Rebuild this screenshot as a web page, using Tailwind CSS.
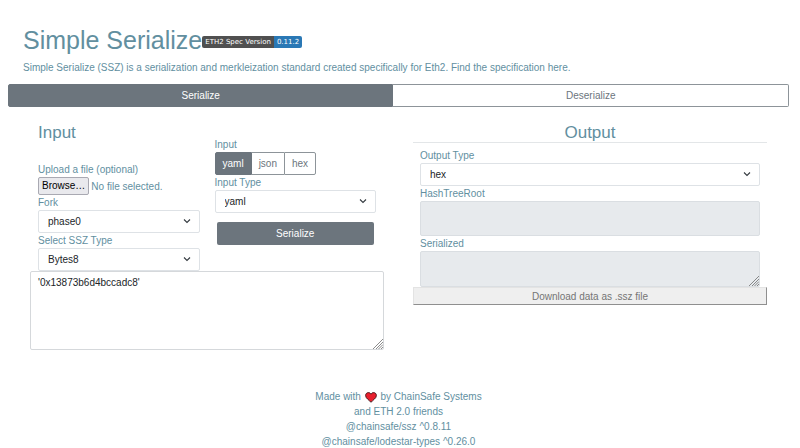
<!DOCTYPE html>
<html lang="en">
  <head>
    <meta charset="UTF-8" />
    <meta name="viewport" content="width=device-width, initial-scale=1.0" />
    <title>Simple Serialize</title>
    <script src="https://cdn.jsdelivr.net/npm/@tailwindcss/browser@4"></script>
  </head>
  <body
    class="bg-white font-['Liberation_Sans',Arial,sans-serif] text-[10px] leading-[15px] text-[#628f9f]"
  >
    <!-- Header -->
    <header class="px-[23px] pt-[25px]">
      <div class="flex items-center">
        <h1 class="text-[25px] leading-[30px]">Simple Serialize</h1>
        <span
          class="mt-1 flex h-3 overflow-hidden rounded-xs font-['DejaVu_Sans',sans-serif] text-[7px] leading-3 text-white"
        >
          <span class="bg-[#505050] px-[3px]">ETH2 Spec Version</span>
          <span class="bg-[#2a78b5] px-[3px]">0.11.2</span>
        </span>
      </div>
      <p class="mt-[5px]">
        Simple Serialize (SSZ) is a serialization and merkleization standard
        created specifically for Eth2. Find the specification
        <a href="#">here</a>.
      </p>
    </header>

    <!-- Mode tabs -->
    <nav class="mt-[9px] mr-[11px] ml-2 flex h-[23px]">
      <button
        type="button"
        class="flex-auto rounded-l-xs border border-[#6c757d] bg-[#6c757d] text-white"
      >
        Serialize
      </button>
      <button
        type="button"
        class="flex-auto rounded-r-xs border border-l-0 border-[#8d9499] text-[#6c757d]"
      >
        Deserialize
      </button>
    </nav>

    <main class="mr-[33px] ml-[30px] grid grid-cols-2 gap-[29px]">
      <!-- Input -->
      <section>
        <div class="grid grid-cols-2 gap-[15px] px-2">
          <div>
            <h2 class="mt-4 mb-[19px] text-[17px] leading-5">Input</h2>
            <label for="file" class="block">Upload a file (optional)</label>
            <label for="file" class="flex h-[18px] items-center">
              <span
                class="rounded-xs border border-[#a9a9b2] bg-[#e9e9ed] px-[3px] leading-4 text-black"
                >Browse…</span
              >
              <span class="ml-0.5">No file selected.</span>
              <input type="file" id="file" class="sr-only" />
            </label>
            <label for="fork" class="block">Fork</label>
            <div class="relative">
              <select
                id="fork"
                class="block h-[23px] w-full appearance-none rounded-xs border border-[#dee2e6] bg-white px-[9px] text-[#212529]"
              >
                <option>phase0</option>
              </select>
              <svg
                class="pointer-events-none absolute top-[7px] right-[9px] size-2"
                viewBox="0 0 8 8"
                fill="none"
                stroke="#343a40"
                stroke-width="1.1"
              >
                <path d="M1 2.5 4 5.5 7 2.5" />
              </svg>
            </div>
            <label for="sszType" class="block">Select SSZ Type</label>
            <div class="relative">
              <select
                id="sszType"
                class="block h-[23px] w-full appearance-none rounded-xs border border-[#dee2e6] bg-white px-[9px] text-[#212529]"
              >
                <option>Bytes8</option>
              </select>
              <svg
                class="pointer-events-none absolute top-[7px] right-[9px] size-2"
                viewBox="0 0 8 8"
                fill="none"
                stroke="#343a40"
                stroke-width="1.1"
              >
                <path d="M1 2.5 4 5.5 7 2.5" />
              </svg>
            </div>
          </div>

          <div class="pt-[30px]">
            <p>Input</p>
            <div class="flex h-[23px]">
              <button
                type="button"
                class="rounded-l-xs border border-[#6c757d] bg-[#6c757d] px-[7px] text-white"
              >
                yaml
              </button>
              <button
                type="button"
                class="border-y border-[#8d9499] px-[7px] text-[#6c757d]"
              >
                json
              </button>
              <button
                type="button"
                class="rounded-r-xs border border-[#8d9499] px-[7px] text-[#6c757d]"
              >
                hex
              </button>
            </div>
            <label for="inputType" class="block">Input Type</label>
            <div class="relative">
              <select
                id="inputType"
                class="block h-[23px] w-full appearance-none rounded-xs border border-[#dee2e6] bg-white px-[9px] text-[#212529]"
              >
                <option>yaml</option>
              </select>
              <svg
                class="pointer-events-none absolute top-[7px] right-[9px] size-2"
                viewBox="0 0 8 8"
                fill="none"
                stroke="#343a40"
                stroke-width="1.1"
              >
                <path d="M1 2.5 4 5.5 7 2.5" />
              </svg>
            </div>
            <div class="px-0.5 pt-[9px]">
              <button
                type="button"
                class="h-[23px] w-full rounded-xs bg-[#6c757d] text-white"
              >
                Serialize
              </button>
            </div>
          </div>
        </div>
        <div class="relative">
          <textarea
            aria-label="Input data"
            class="block h-[79px] w-full resize-none rounded-xs border border-[#d5d8db] bg-white px-[7px] py-[3px] text-[#212529]"
          >
'0x13873b6d4bccadc8'</textarea
          >
          <svg
            class="pointer-events-none absolute right-px bottom-px size-2.5"
            viewBox="0 0 10 10"
            stroke="#6f6f6f"
            stroke-width="0.8"
          >
            <path d="M0 10 10 0M3 10 10 3M5.5 10 10 5.5M8 10 10 8" />
          </svg>
        </div>
      </section>

      <!-- Output -->
      <section>
        <h2
          class="mb-[5px] border-b border-[#e3e6e8] pt-4 text-center text-[17px] leading-[19px]"
        >
          Output
        </h2>
        <div class="px-[7px]">
          <label for="outputType" class="block">Output Type</label>
          <div class="relative">
            <select
              id="outputType"
              class="block h-[23px] w-full appearance-none rounded-xs border border-[#dee2e6] bg-white px-[9px] text-[#212529]"
            >
              <option>hex</option>
            </select>
            <svg
              class="pointer-events-none absolute top-[7px] right-[9px] size-2"
              viewBox="0 0 8 8"
              fill="none"
              stroke="#343a40"
              stroke-width="1.1"
            >
              <path d="M1 2.5 4 5.5 7 2.5" />
            </svg>
          </div>
          <label for="hashTreeRoot" class="block">HashTreeRoot</label>
          <input
            type="text"
            id="hashTreeRoot"
            readonly
            class="block h-[35px] w-full rounded-xs border border-[#dadee2] bg-[#e7eaed] px-2"
          />
          <label for="serialized" class="block">Serialized</label>
          <div class="relative">
            <textarea
              id="serialized"
              readonly
              class="block h-9 w-full resize-none rounded-xs border border-[#dadee2] bg-[#e7eaed] px-2"
            ></textarea>
            <svg
              class="pointer-events-none absolute right-px bottom-px size-2.5"
              viewBox="0 0 10 10"
              stroke="#6f6f6f"
              stroke-width="0.8"
            >
              <path d="M0 10 10 0M3 10 10 3M5.5 10 10 5.5M8 10 10 8" />
            </svg>
          </div>
        </div>
        <button
          type="button"
          class="block h-[18px] w-full border border-t-[#e3e3e3] border-r-[#8f8f8f] border-b-[#8f8f8f] border-l-[#e3e3e3] bg-[#efefef] text-[#757575]"
        >
          Download data as .ssz file
        </button>
      </section>
    </main>

    <!-- Footer -->
    <footer class="mt-[39px] pr-[3px] text-center">
      <p>
        Made with
        <svg
          class="mx-px inline h-[11px] w-3 align-[-3px]"
          viewBox="0 0 12 11"
          fill="#e8202e"
          stroke="#3a1216"
          stroke-width="0.9"
        >
          <path
            d="M6 10.3C4.6 8.3.6 6.5.6 3.5.6 1.7 1.9.6 3.4.6 4.6.6 5.5 1.2 6 2.2 6.5 1.2 7.400.6 8.6.6 10.1.6 11.4 1.7 11.4 3.5 11.4 6.5 7.4 8.3 6 10.3Z"
          />
        </svg>
        by ChainSafe Systems
      </p>
      <p>and ETH 2.0 friends</p>
      <p>@chainsafe/ssz ^0.8.11</p>
      <p>@chainsafe/lodestar-types ^0.26.0</p>
    </footer>
  </body>
</html>
